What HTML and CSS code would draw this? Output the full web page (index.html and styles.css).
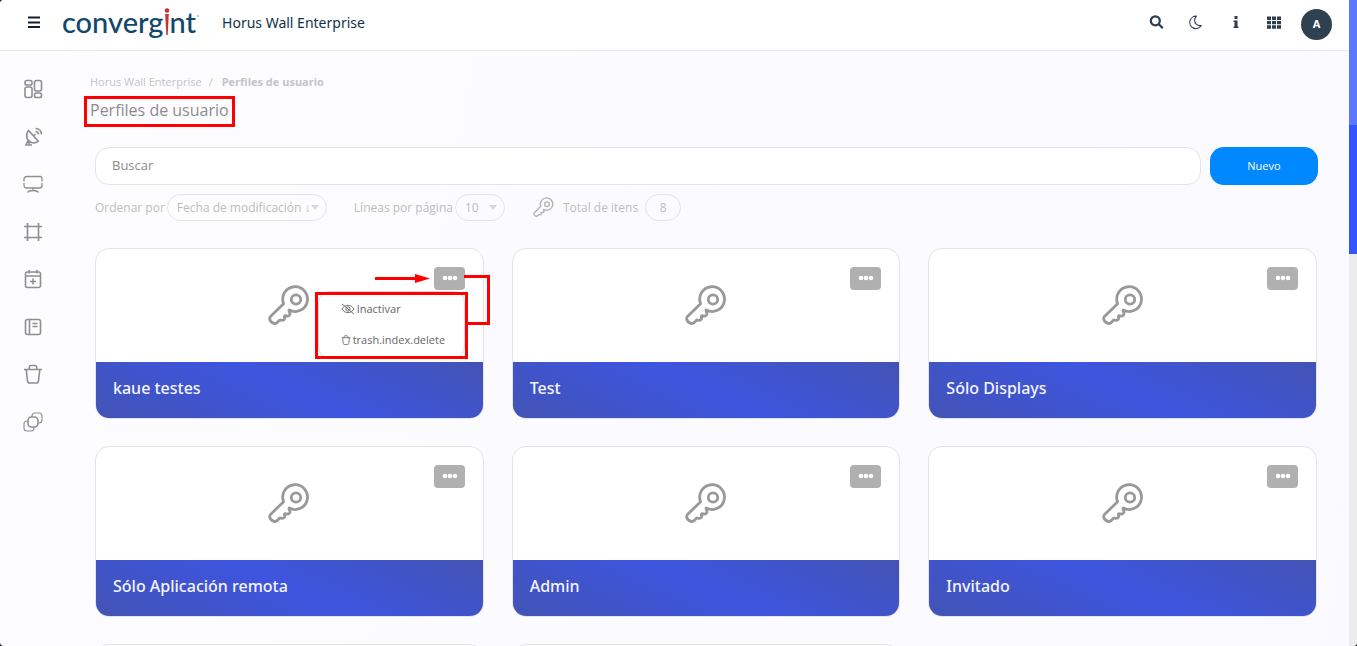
FILE: index.html
```html
<!DOCTYPE html>
<html lang="es">
<head>
<meta charset="utf-8">
<meta name="viewport" content="width=device-width, initial-scale=1">
<title>Perfiles de usuario</title>
<link rel="stylesheet" href="styles.css">
</head>
<body>
<svg class="sprite" aria-hidden="true">
  <symbol id="key" viewBox="0 0 42 42"><g fill="none" stroke="currentColor" stroke-width="2.8" stroke-linejoin="round" stroke-linecap="round"><circle cx="28" cy="14.500" r="4.700"/><path d="M15.600 18.700a12.400 12.400 0 1 1 5.600 6.300c-.8 1.500 1.300 2.400.7 4.400c-.5 1.700-2.400 1.900-3.700 1.500c-2-.6-2 .3-1.600 1.600c.5 2-1.600 3.500-3.600 2.700c-1.500-.6-1.900.2-2.600 1.100c-1 1.700-3 2.700-5.100 1.800c-1.800-.8-3.400-2.600-3.600-4.300c-.1-1 .3-1.800 1-2.500z"/></g></symbol>
  <symbol id="trash" viewBox="0 0 20 20"><path d="M1 5.500h18M3.200 5.500l1.300 11.300q.3 2.200 2.200 2.200h6.600q1.900 0 2.200-2.200l1.300-11.300M6.300 5.500V3.300q0-1.800 1.700-1.800h4q1.700 0 1.700 1.800v2.200" fill="none" stroke="currentColor" stroke-width="1.600"/></symbol>
</svg>
<div class="app">
  <div class="page">
    <header class="topbar">
      <button class="icon-btn" aria-label="Menú"><svg viewBox="0 0 16 16"><path d="M2 2.500h12M2 7.500h12M2 12h12" stroke="currentColor" stroke-width="1.800"/></svg></button>
      <a class="logo" href="#" aria-label="convergint"><span>converg</span><svg class="logo-i" viewBox="0 0 6 28"><circle cx="3" cy="2.500" r="2.300"/><path d="M1.200 6h3.600L3.700 27H2.300z"/></svg><span>nt</span><svg class="logo-dot" viewBox="0 0 4 4"><circle cx="2" cy="2" r="1"/></svg></a>
      <span class="product">Horus Wall Enterprise</span>
      <div class="tools">
        <button class="icon-btn" aria-label="Buscar"><svg viewBox="0 0 16 16"><g fill="none" stroke="currentColor" stroke-width="2.200" stroke-linecap="round"><circle cx="6.300" cy="5.800" r="4.500"/><path d="M9.800 9.300l3.400 3.300"/></g></svg></button>
        <button class="icon-btn" aria-label="Modo oscuro"><svg viewBox="0 0 16 16"><path d="M8.500 1.200a6.200 6.200 0 1 0 4.800 9.300c-3.800.6-6.900-1.700-6.700-5.200c.1-1.700.8-3 1.900-4.100z" fill="none" stroke="currentColor" stroke-width="1.100" stroke-linejoin="round"/></svg></button>
        <button class="icon-btn" aria-label="Información"><svg viewBox="0 0 16 16"><path d="M7.500 1h3v3h-3zM6.500 5.500h4v6h1V13h-5v-1.500h1V7h-1z" fill="currentColor"/></svg></button>
        <button class="icon-btn" aria-label="Aplicaciones"><svg viewBox="0 0 16 16"><path d="M1 1.500h4v3.400H1zM6 1.500h4v3.400H6zM11 1.500h4v3.400h-4zM1 5.900h4v3.400H1zM6 5.900h4v3.400H6zM11 5.900h4v3.400h-4zM1 10.300h4v3.400H1zM6 10.300h4v3.400H6zM11 10.300h4v3.400h-4z" fill="currentColor"/></svg></button>
      </div>
      <button class="avatar" aria-label="Cuenta A">A</button>
    </header>
    <div class="body">
      <nav class="sidebar" aria-label="Principal">
        <a href="#" aria-label="Panel"><svg viewBox="0 0 20 20"><rect x="2" y="1.500" width="7" height="4.500" rx="1.800"/><rect x="2" y="8" width="7" height="10.500" rx="2"/><rect x="11.500" y="1.500" width="7" height="10.500" rx="2"/><rect x="11.500" y="14" width="7" height="4.500" rx="1.800"/></svg></a>
        <a href="#" aria-label="Señales"><svg viewBox="0 0 20 20"><path d="M5.500 3.500c-3.300 4.500-1.800 10.500 2.800 12c2.500.8 5 .3 7-1.300zM10.500 9l2-2M5 13.500L3 18h6M3 18h4l-2-4M12.500 4.500c1.800 0 3 1.300 3 3M12.500 1.500c3.500 0 5.800 2.500 5.800 5.800"/></svg></a>
        <a href="#" aria-label="Pantallas"><svg viewBox="0 0 20 20"><path d="M1 7.500V5q0-2.500 3-2.500h13q2 0 2 2v3M19 9v3q0 2-2.500 2H4q-3 0-3-3V9M10 14v2.500M4.500 18.500c1-1.500 2.500-2 5.500-2s4.500.5 5.500 2" stroke-width="1.300"/></svg></a>
        <a href="#" aria-label="Diseños"><svg viewBox="0 0 20 20"><path d="M4.500 1v18M15.500 1v18M1 4.500h18M1 15.500h18" stroke-width="1.700"/></svg></a>
        <a href="#" aria-label="Agenda"><svg viewBox="0 0 20 20"><rect x="2.500" y="3" width="15" height="15.500" rx="2"/><path d="M2.500 7h15M6 1v3.500M14 1v3.500M10 9.500v6M7 12.500h6"/></svg></a>
        <a href="#" aria-label="Registros"><svg viewBox="0 0 20 20"><rect x="2.500" y="2.500" width="15" height="15" rx="2"/><path d="M6.500 2.500v15M9.500 6.500h5M9.500 9.500h5"/></svg></a>
        <a href="#" aria-label="Papelera"><svg><use href="#trash"/></svg></a>
        <a href="#" aria-label="Grupos"><svg viewBox="0 0 20 20"><path d="M9 5V4q0-3 3-3h4q3 0 3 3v4q0 3-3 3h-1M5 9H4q-3 0-3 3v4q0 3 3 3h4q3 0 3-3v-1" stroke-width="1.100"/><rect x="5" y="5" width="10" height="10" rx="3.500"/></svg></a>
      </nav>
      <main class="content">
        <nav class="crumbs" aria-label="Ruta"><a href="#">Horus Wall Enterprise</a><span>/</span><b>Perfiles de usuario</b></nav>
        <h1 class="title">Perfiles de usuario</h1>
        <div class="panel">
          <div class="search-row">
            <input class="search" type="search" placeholder="Buscar" aria-label="Buscar">
            <button class="new-btn">Nuevo</button>
          </div>
          <div class="filters">
            <label for="order">Ordenar por</label>
            <span class="pick pick-order"><select id="order"><option>Fecha de modificación ↓</option></select></span>
            <label class="spaced" for="lines">Líneas por página</label>
            <span class="pick pick-lines"><select id="lines"><option>10</option></select></span>
            <svg class="total-icon" aria-hidden="true"><use href="#key"/></svg>
            <span class="total-label">Total de itens</span>
            <span class="total">8</span>
          </div>
          <section class="cards">
            <article class="card">
              <div class="card-top"><svg class="key"><use href="#key"/></svg></div>
              <h2>kaue testes</h2>
              <button class="more" aria-label="Opciones" aria-expanded="true"><svg viewBox="0 0 16 6"><circle cx="3" cy="3" r="2.300"/><circle cx="8" cy="3" r="2.300"/><circle cx="13" cy="3" r="2.300"/></svg></button>
              <div class="menu">
                <button><svg class="eye" viewBox="0 0 15 12"><path d="M1 6c3.500-5.300 9.500-5.300 13 0c-3.500 5.300-9.500 5.300-13 0zM1 .5l13 11"/><circle cx="7.500" cy="6" r="2.300"/></svg>Inactivar</button>
                <button><svg class="bin"><use href="#trash"/></svg>trash.index.delete</button>
              </div>
              <svg class="callout" viewBox="0 0 176 90" aria-hidden="true"><path d="M60 8.500h42M1.500 23.500h150v64H1.500zM149 6.500h24.500v47H152" fill="none" stroke="#f00" stroke-width="3"/><path d="M100 4l15 4.500L100 13z" fill="#f00"/></svg>
            </article>
            <article class="card">
              <div class="card-top"><svg class="key"><use href="#key"/></svg></div>
              <h2>Test</h2>
              <button class="more" aria-label="Opciones"><svg viewBox="0 0 16 6"><circle cx="3" cy="3" r="2.300"/><circle cx="8" cy="3" r="2.300"/><circle cx="13" cy="3" r="2.300"/></svg></button>
            </article>
            <article class="card">
              <div class="card-top"><svg class="key"><use href="#key"/></svg></div>
              <h2>Sólo Displays</h2>
              <button class="more" aria-label="Opciones"><svg viewBox="0 0 16 6"><circle cx="3" cy="3" r="2.300"/><circle cx="8" cy="3" r="2.300"/><circle cx="13" cy="3" r="2.300"/></svg></button>
            </article>
            <article class="card">
              <div class="card-top"><svg class="key"><use href="#key"/></svg></div>
              <h2>Sólo Aplicación remota</h2>
              <button class="more" aria-label="Opciones"><svg viewBox="0 0 16 6"><circle cx="3" cy="3" r="2.300"/><circle cx="8" cy="3" r="2.300"/><circle cx="13" cy="3" r="2.300"/></svg></button>
            </article>
            <article class="card">
              <div class="card-top"><svg class="key"><use href="#key"/></svg></div>
              <h2>Admin</h2>
              <button class="more" aria-label="Opciones"><svg viewBox="0 0 16 6"><circle cx="3" cy="3" r="2.300"/><circle cx="8" cy="3" r="2.300"/><circle cx="13" cy="3" r="2.300"/></svg></button>
            </article>
            <article class="card">
              <div class="card-top"><svg class="key"><use href="#key"/></svg></div>
              <h2>Invitado</h2>
              <button class="more" aria-label="Opciones"><svg viewBox="0 0 16 6"><circle cx="3" cy="3" r="2.300"/><circle cx="8" cy="3" r="2.300"/><circle cx="13" cy="3" r="2.300"/></svg></button>
            </article>
            <article class="card"><div class="card-top"></div></article>
            <article class="card"><div class="card-top"></div></article>
          </section>
        </div>
      </main>
    </div>
  </div>
  <div class="scrollbar" aria-hidden="true"><div class="thumb"></div></div>
</div>
</body>
</html>
```
FILE: styles.css
```css
* { box-sizing: border-box; }
body {
  margin: 0;
  background: #222;
  color: #999;
  font: 12px/16px "Open Sans", "Noto Sans", sans-serif;
}
button, input, select { font: inherit; color: inherit; }
button { border: 0; padding: 0; background: none; cursor: pointer; }
a { color: inherit; text-decoration: none; }
svg { display: block; }
.sprite { position: absolute; width: 0; height: 0; }

.app {
  display: grid;
  grid-template-columns: minmax(0, 1fr) 8px;
  height: 100vh;
  overflow: hidden;
  border-radius: 4px 0 4px 4px;
  background: #fdfdff;
}
.page { display: flex; flex-direction: column; min-height: 0; }

.topbar {
  display: flex;
  align-items: center;
  flex: none;
  height: 51px;
  padding: 0 17px 4px 26px;
  border-bottom: 1px solid #e8e8ee;
  background: #fff;
  color: #2c3e50;
}
.icon-btn { width: 16px; height: 16px; }
.icon-btn svg { width: 16px; height: 16px; }
.topbar > .icon-btn { color: #12202c; }
.logo {
  display: flex;
  align-items: center;
  margin-left: 20px;
  padding-bottom: 2px;
  color: #12496b;
  font: 500 29px/32px Lato, sans-serif;
}
.logo-i { width: 6px; height: 28px; fill: #c8322f; }
.logo-dot { width: 4px; height: 4px; margin-bottom: 12px; fill: #9bb4c4; }
.product { margin-left: 22px; color: #0f3247; font: 14px/20px "Noto Sans", sans-serif; }
.tools { display: flex; gap: 23px; margin-left: auto; }
.avatar {
  width: 31px;
  height: 31px;
  margin: 2px 0 0 19px;
  border-radius: 50%;
  background: #2f4050;
  color: #fff;
  font-size: 11px;
  font-weight: 700;
}

.body { display: flex; flex: 1; min-height: 0; }
.sidebar {
  display: flex;
  flex-direction: column;
  justify-content: space-between;
  align-items: center;
  flex: none;
  width: 63px;
  height: 353px;
  margin-top: 28px;
  padding-left: 2px;
  color: #8f8f8f;
}
.sidebar svg { width: 20px; height: 20px; fill: none; stroke: currentColor; stroke-width: 1.6; }
.sidebar a:hover { color: #3d55df; }

.content {
  flex: 1;
  min-width: 0;
  overflow: hidden;
  padding: 23px 31px 0 21px;
  background: linear-gradient(100deg, #fdfdff, #f9f9ff);
}
.crumbs { display: flex; gap: 7px; padding-left: 6px; color: #c4c4c4; font-size: 11px; }
.crumbs b { margin-left: 2px; }
.title {
  width: fit-content;
  margin: 6px 0 20px;
  padding: 0 3px 2px;
  border: 3px solid #f00;
  color: #8c8c8c;
  font-size: 16px;
  font-weight: 400;
  line-height: 23px;
}
.panel { padding-left: 11px; }

.search-row { display: flex; gap: 9px; }
.search {
  flex: 1;
  min-width: 0;
  height: 38px;
  padding: 0 16px 2px;
  border: 1px solid #e4e4e8;
  border-radius: 14px;
  background: #fff;
  outline: 0;
  font-size: 13px;
}
.search::placeholder { color: #8c8c8c; opacity: 1; }
.new-btn {
  width: 108px;
  height: 38px;
  border-radius: 14px;
  background: #0088ff;
  color: #fff;
  font-size: 11px;
}

.filters { display: flex; align-items: center; margin-top: 9px; color: #bdbdbd; }
.spaced { margin-left: 27px; }
.pick { position: relative; margin-left: 2px; }
.pick::after {
  content: "";
  position: absolute;
  top: 11px;
  right: 8px;
  border: 4px solid transparent;
  border-top: 5px solid #d8d8d8;
  border-bottom: 0;
  pointer-events: none;
}
.pick select {
  display: block;
  width: 100%;
  height: 27px;
  padding: 0 9px;
  border: 1px solid #e4e4e8;
  border-radius: 14px;
  background: transparent;
  appearance: none;
  outline: 0;
}
.pick-order { width: 160px; }
.pick-lines { width: 50px; }
.total-icon { width: 21px; height: 21px; margin-left: 28px; color: #b4b4b4; }
.total-label { margin-left: 9px; }
.total {
  width: 36px;
  margin-left: 7px;
  border: 1px solid #e4e4e8;
  border-radius: 14px;
  line-height: 25px;
  text-align: center;
}

.cards {
  display: grid;
  grid-template-columns: repeat(3, minmax(0, 1fr));
  gap: 27px 28px;
  margin: 27px 1px 0 0;
}
.card {
  position: relative;
  border: 1px solid #e4e4e8;
  border-radius: 14px;
  background: #fff;
}
.card-top { display: flex; align-items: center; justify-content: center; height: 113px; }
.key { width: 42px; height: 42px; color: #999; }
.card h2 {
  margin: 0;
  padding: 15px 17px 18px;
  border-radius: 0 0 13px 13px;
  background: linear-gradient(25deg, #4353b5, #3d55df 50%, #4353b5);
  color: #f4f4ff;
  font: 500 16px/23px "Noto Sans", sans-serif;
}
.more {
  position: absolute;
  top: 18px;
  right: 18px;
  width: 31px;
  height: 23px;
  padding: 0 7px 2px 8px;
  border-radius: 4px;
  background: #b0b0b0;
}
.more svg { width: 16px; height: 6px; fill: #fff; }
.menu {
  position: absolute;
  top: 42px;
  right: 18px;
  width: 147px;
  padding: 1px 0 3px;
  border: 1px solid #d8d8d8;
  border-radius: 12px;
  background: #fff;
  color: #666;
  font-size: 11px;
}
.menu button {
  display: flex;
  align-items: center;
  gap: 2px;
  width: 100%;
  height: 31px;
  padding-left: 22px;
}
.menu svg { fill: none; stroke: currentColor; }
.eye { width: 14px; height: 12px; }
.bin { width: 10px; height: 10px; }
.callout { position: absolute; top: 21px; right: -8px; width: 176px; height: 90px; pointer-events: none; }

.scrollbar { background: #ececec; }
.thumb { height: 254px; background: linear-gradient(#5b78ff 125px, #3355ff 125px); }
```
